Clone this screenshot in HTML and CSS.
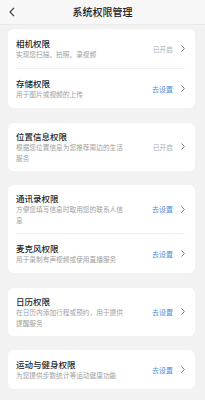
FILE: index.html
```html
<!DOCTYPE html>
<html lang="zh-CN">
<head>
<meta charset="utf-8">
<title>系统权限管理</title>
<link rel="stylesheet" href="styles.css">
</head>
<body>
<header class="topbar">
  <svg class="back" width="6" height="10" viewBox="0 0 6 10"><path d="M5 0.8 L1 5 L5 9.2" fill="none" stroke="#333" stroke-width="1.1"/></svg>
  <h1 class="title">系统权限管理</h1>
</header>
<main class="list">
  <section class="card">
    <div class="row">
      <div class="text"><div class="name">相机权限</div><div class="desc">实现您扫描、拍照、录视频</div></div>
      <div class="action"><span class="state">已开启</span><svg class="chev" width="4" height="7" viewBox="0 0 4 7"><path d="M0.5 0.5 L3.3 3.5 L0.5 6.5" fill="none" stroke="#666" stroke-width="0.9"/></svg></div>
    </div>
    <div class="divider"></div>
    <div class="row">
      <div class="text"><div class="name">存储权限</div><div class="desc">用于图片或视频的上传</div></div>
      <div class="action"><span class="link">去设置</span><svg class="chev" width="4" height="7" viewBox="0 0 4 7"><path d="M0.5 0.5 L3.3 3.5 L0.5 6.5" fill="none" stroke="#666" stroke-width="0.9"/></svg></div>
    </div>
  </section>
  <section class="card">
    <div class="row">
      <div class="text"><div class="name">位置信息权限</div><div class="desc">根据您位置信息为您推荐周边的生活服务</div></div>
      <div class="action"><span class="state">已开启</span><svg class="chev" width="4" height="7" viewBox="0 0 4 7"><path d="M0.5 0.5 L3.3 3.5 L0.5 6.5" fill="none" stroke="#666" stroke-width="0.9"/></svg></div>
    </div>
  </section>
  <section class="card">
    <div class="row">
      <div class="text"><div class="name">通讯录权限</div><div class="desc">方便您填写信息时取用您的联系人信息</div></div>
      <div class="action"><span class="link">去设置</span><svg class="chev" width="4" height="7" viewBox="0 0 4 7"><path d="M0.5 0.5 L3.3 3.5 L0.5 6.5" fill="none" stroke="#666" stroke-width="0.9"/></svg></div>
    </div>
    <div class="divider"></div>
    <div class="row">
      <div class="text"><div class="name">麦克风权限</div><div class="desc">用于录制有声视频或使用直播服务</div></div>
      <div class="action"><span class="link">去设置</span><svg class="chev" width="4" height="7" viewBox="0 0 4 7"><path d="M0.5 0.5 L3.3 3.5 L0.5 6.5" fill="none" stroke="#666" stroke-width="0.9"/></svg></div>
    </div>
  </section>
  <section class="card">
    <div class="row">
      <div class="text"><div class="name">日历权限</div><div class="desc">在日历内添加行程或预约，用于提供提醒服务</div></div>
      <div class="action"><span class="link">去设置</span><svg class="chev" width="4" height="7" viewBox="0 0 4 7"><path d="M0.5 0.5 L3.3 3.5 L0.5 6.5" fill="none" stroke="#666" stroke-width="0.9"/></svg></div>
    </div>
  </section>
  <section class="card">
    <div class="row">
      <div class="text"><div class="name">运动与健身权限</div><div class="desc">为您提供步数统计等运动健康功能</div></div>
      <div class="action"><span class="link">去设置</span><svg class="chev" width="4" height="7" viewBox="0 0 4 7"><path d="M0.5 0.5 L3.3 3.5 L0.5 6.5" fill="none" stroke="#666" stroke-width="0.9"/></svg></div>
    </div>
  </section>
</main>
</body>
</html>
```
FILE: styles.css
```css
* { box-sizing: border-box; }
html, body { margin: 0; padding: 0; }
body {
  width: 205px;
  height: 400px;
  overflow: hidden;
  background: #f2f2f2;
  font-family: "Noto Sans CJK SC", "Noto Sans", sans-serif;
  color: #222;
}
.topbar {
  position: relative;
  height: 25px;
  background: #f7f7f7;
  border-bottom: 1px solid #e9e9e9;
  display: flex;
  align-items: center;
  justify-content: center;
}
.back {
  position: absolute;
  left: 9px;
  top: 7px;
}
.title {
  margin: 0;
  font-size: 10px;
  font-weight: 500;
  line-height: 14px;
  color: #222;
}
.list {
  display: flex;
  flex-direction: column;
  gap: 14.5px;
  padding: 4px 10px 0 8px;
}
.card {
  background: #fff;
  border-radius: 6px;
  padding: 0 10px 0 8px;
}
.row {
  display: flex;
  align-items: center;
  justify-content: space-between;
  min-height: 39px;
  padding: 7px 0;
}
.text {
  max-width: 110px;
}
.name {
  font-size: 8.5px;
  line-height: 12px;
  font-weight: 500;
  color: #262626;
}
.desc {
  font-size: 6.7px;
  line-height: 11px;
  color: #a0a0a0;
}
.action {
  display: flex;
  align-items: center;
  gap: 8px;
}
.state {
  font-size: 6.7px;
  color: #ababab;
}
.link {
  font-size: 7px;
  color: #4a8fdc;
}
.chev { display: block; }
.divider {
  height: 1px;
  background: #f0f0f0;
}
```
